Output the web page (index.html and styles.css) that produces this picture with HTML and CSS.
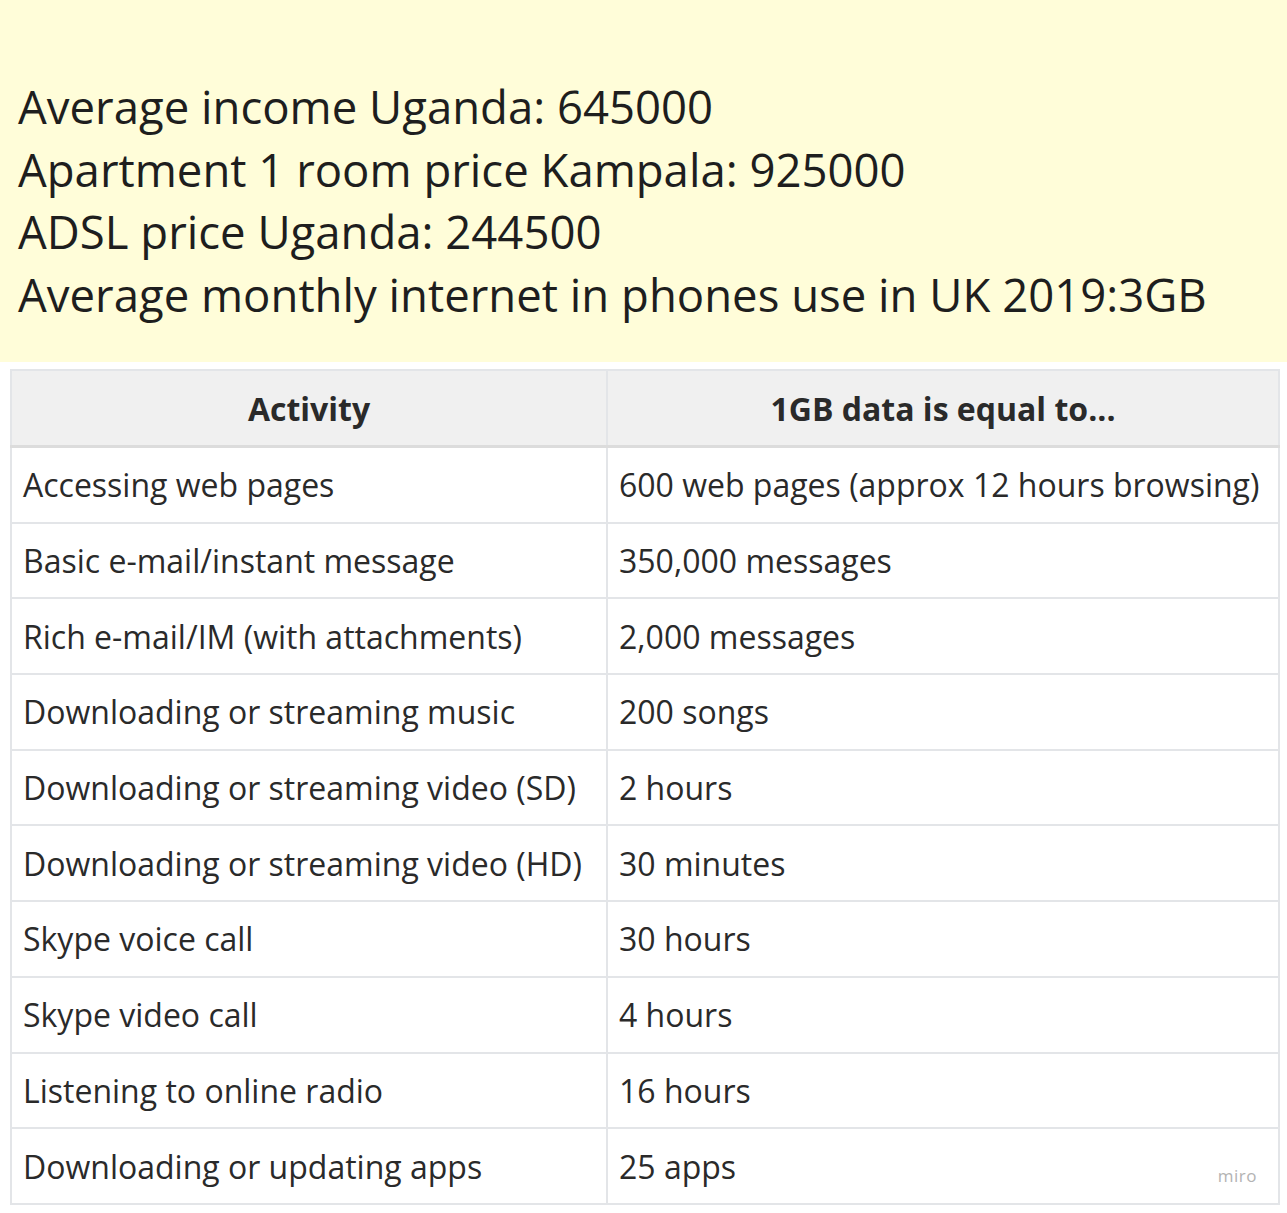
FILE: index.html
```html
<!DOCTYPE html>
<html>
<head>
<meta charset="utf-8">
<link rel="stylesheet" href="styles.css">
</head>
<body>
<div class="note">
  <p>Average income Uganda: 645000</p>
  <p>Apartment 1 room price Kampala: 925000</p>
  <p>ADSL price Uganda: 244500</p>
  <p>Average monthly internet in phones use in UK 2019:3GB</p>
</div>
<div class="table-wrap">
  <table class="data">
    <thead>
      <tr><th class="c1">Activity</th><th class="c2">1GB data is equal to...</th></tr>
    </thead>
    <tbody>
      <tr><td>Accessing web pages</td><td>600 web pages (approx 12 hours browsing)</td></tr>
      <tr><td>Basic e-mail/instant message</td><td>350,000 messages</td></tr>
      <tr><td>Rich e-mail/IM (with attachments)</td><td>2,000 messages</td></tr>
      <tr><td>Downloading or streaming music</td><td>200 songs</td></tr>
      <tr><td>Downloading or streaming video (SD)</td><td>2 hours</td></tr>
      <tr><td>Downloading or streaming video (HD)</td><td>30 minutes</td></tr>
      <tr><td>Skype voice call</td><td>30 hours</td></tr>
      <tr><td>Skype video call</td><td>4 hours</td></tr>
      <tr><td>Listening to online radio</td><td>16 hours</td></tr>
      <tr><td>Downloading or updating apps</td><td>25 apps<span class="miro">miro</span></td></tr>
    </tbody>
  </table>
</div>
</body>
</html>
```
FILE: styles.css
```css
html, body {
  margin: 0;
  padding: 0;
  background: #ffffff;
}
body {
  width: 1287px;
  height: 1213px;
  overflow: hidden;
  font-family: "Open Sans", "Noto Sans", sans-serif;
  color: #1f1f1f;
}
.note {
  background: #fffdd9;
  height: 362px;
  box-sizing: border-box;
  padding: 75px 0 0 18px;
}
.note p {
  margin: 0;
  font-size: 45.5px;
  line-height: 62.5px;
  color: #1e1e1e;
}
.table-wrap {
  padding: 7px 8px 0 10px;
}
.data {
  border-collapse: collapse;
  width: 1270px;
  table-layout: fixed;
  font-family: "Open Sans", "Noto Sans", sans-serif;
  font-size: 32px;
  color: #2a2a2a;
}
.data th, .data td {
  border: 2px solid #e3e5e8;
  height: 73.7px;
  padding: 0 11px;
  text-align: left;
  white-space: nowrap;
}
.data th {
  background: #f0f0f0;
  text-align: center;
  font-weight: 700;
  font-size: 32px;
  height: 74px;
  border-bottom-width: 3px;
  border-bottom-color: #dcdcdc;
}
.data .c1 { width: 572px; }
.data td:last-child { position: relative; }
.miro {
  position: absolute;
  right: 21px;
  bottom: 16px;
  font-size: 17px;
  color: #b3b3b3;
  letter-spacing: 0.5px;
}
```
